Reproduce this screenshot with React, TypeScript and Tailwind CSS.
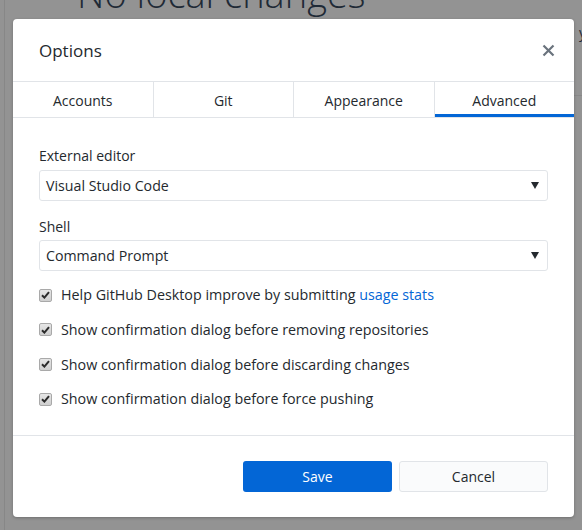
import React from "react";

const font = { fontFamily: "'Open Sans', 'Liberation Sans', sans-serif" };

function Check({ children }: { children: React.ReactNode }) {
  return (
    <div className="flex h-5 items-center">
      <span className="mr-[9px] flex h-[13px] w-[13px] items-center justify-center rounded-[2px] border border-[#a9a9a9] bg-[linear-gradient(#e6e6e6,#cfcfcf)]">
        <svg width="9" height="8" viewBox="0 0 9 8">
          <path d="M1 4.2 L3.4 6.6 L8 1.2" fill="none" stroke="#2b2b2b" strokeWidth="2" />
        </svg>
      </span>
      <span className="text-[14.3px] text-[#24292e]">{children}</span>
    </div>
  );
}

function Select({ value }: { value: string }) {
  return (
    <div className="flex h-[31px] items-center justify-between rounded-[3px] border border-[#e1e4e8] bg-white pl-[6px] pr-[8px] text-[14.2px] text-[#24292e]">
      <span>{value}</span>
      <svg width="8" height="7" viewBox="0 0 8 7">
        <path d="M0 0 H8 L4 7 Z" fill="#24292e" />
      </svg>
    </div>
  );
}

export default function App() {
  const tabs = ["Accounts", "Git", "Appearance", "Advanced"];
  return (
    <div className="relative h-[530px] w-[582px] overflow-hidden bg-[#939393]" style={font}>
      <div className="flex h-full">
        <div className="w-[5px] border-r border-[#878787]" />
        <div className="flex-1">
          <div className="-mt-[31px] ml-[72px] text-[38px] font-light leading-[48px] text-[#1f2a36]">
            No local changes
          </div>
        </div>
      </div>
      <div className="absolute right-[-4px] top-[22px] text-[14px] text-[#1f2a36]">y</div>
      <div className="absolute right-0 top-[95px] h-px w-[8px] bg-[#888]" />

      <div className="absolute left-[13px] top-[19px] w-[561px] rounded-[4px] bg-white shadow-[0_1px_3px_rgba(0,0,0,0.25)]">
        <div className="flex h-[63px] items-center justify-between border-b border-[#e1e4e8] pl-[26px] pr-[19px]">
          <span className="pt-[2px] text-[17px] text-[#24292e]">Options</span>
          <svg width="13" height="13" viewBox="0 0 13 13">
            <path d="M1.5 1.5 L11.5 11.5 M11.5 1.5 L1.5 11.5" stroke="#6a737d" strokeWidth="2.2" />
          </svg>
        </div>
        <div className="flex h-[36px] border-b border-[#e1e4e8]">
          {tabs.map((t, i) => (
            <div
              key={t}
              className={`relative flex flex-1 items-center justify-center pt-[2px] text-[14px] text-[#24292e] ${i > 0 ? "border-l border-[#e1e4e8]" : ""}`}
            >
              {t}
              {i === 3 && <div className="absolute bottom-0 left-0 right-0 h-[3px] bg-[#0366d6]" />}
            </div>
          ))}
        </div>
        <div className="border-b border-[#e1e4e8] px-[26px] pb-[26px] pt-[27px]">
          <div className="flex h-5 items-center pt-[1px] text-[14px] text-[#24292e]">External editor</div>
          <div className="mt-[5px]">
            <Select value="Visual Studio Code" />
          </div>
          <div className="mt-[15px] flex h-5 items-center text-[14px] text-[#24292e]">Shell</div>
          <div className="mt-[4px]">
            <Select value="Command Prompt" />
          </div>
          <div className="mt-[14px] flex flex-col gap-[14.7px]">
            <Check>
              Help GitHub Desktop improve by submitting <span className="text-[#0366d6]">usage stats</span>
            </Check>
            <Check>Show confirmation dialog before removing repositories</Check>
            <Check>Show confirmation dialog before discarding changes</Check>
            <Check>Show confirmation dialog before force pushing</Check>
          </div>
        </div>
        <div className="flex justify-end gap-[7px] px-[26px] pb-[25px] pt-[25px]">
          <button className="h-[31px] w-[149px] rounded-[3px] bg-[#0366d6] text-[14px] text-white">Save</button>
          <button className="h-[31px] w-[149px] rounded-[3px] border border-[#e1e4e8] bg-[#fafbfc] text-[14px] text-[#24292e]">
            Cancel
          </button>
        </div>
      </div>
    </div>
  );
}
